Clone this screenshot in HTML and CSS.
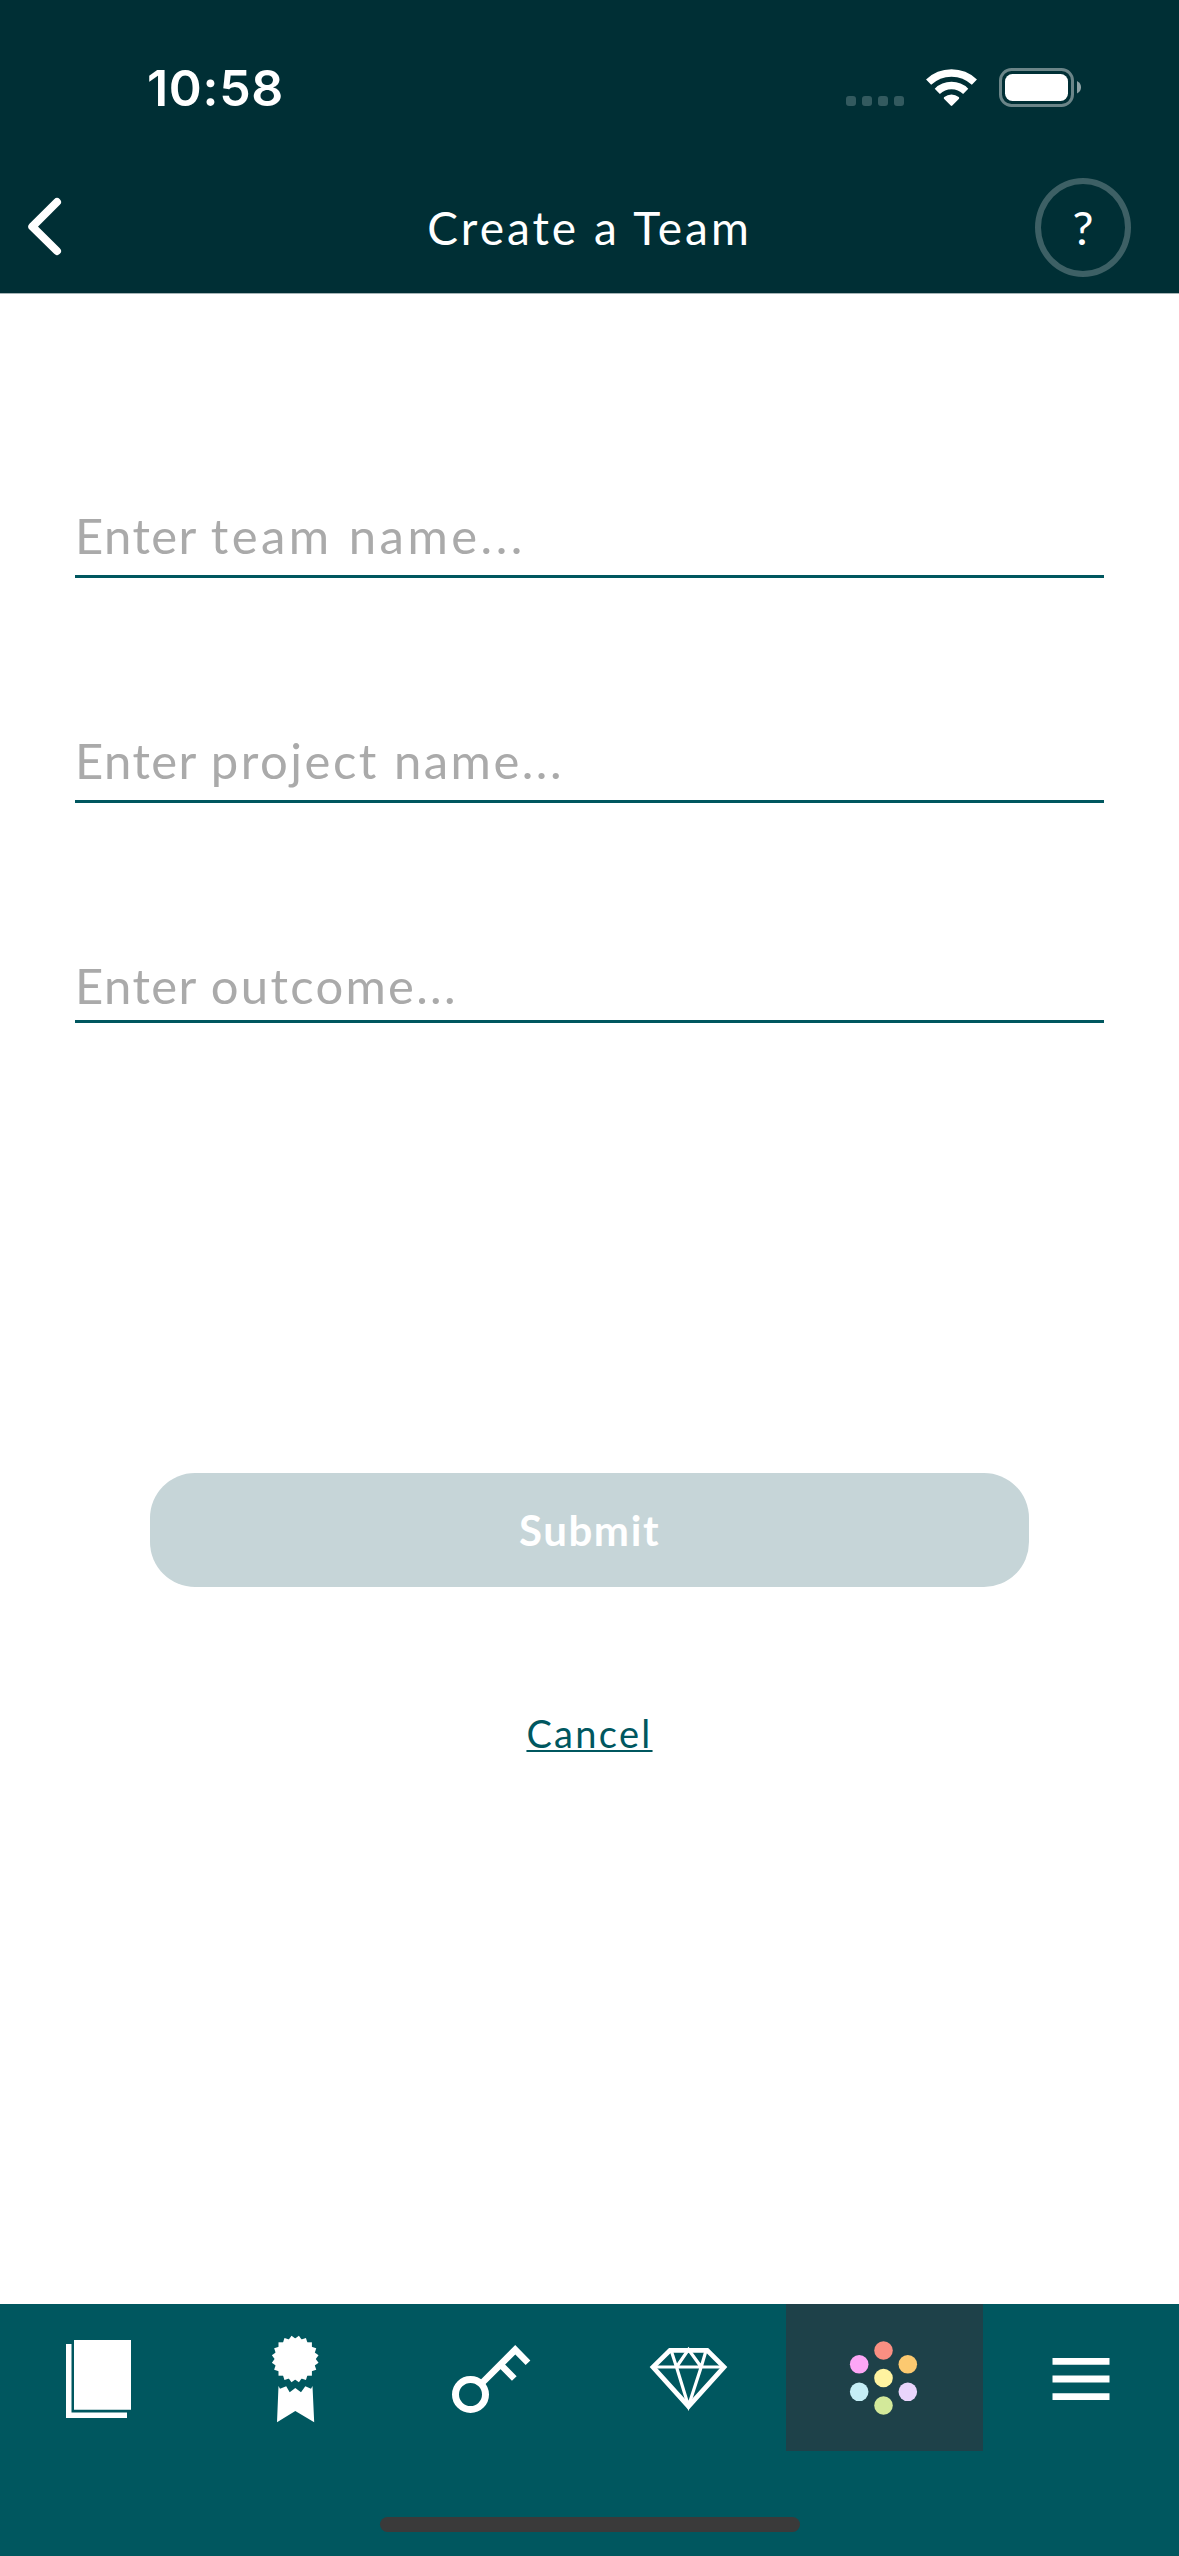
FILE: index.html
```html
<!DOCTYPE html>
<html lang="en">
<head>
<meta charset="utf-8">
<title>Create a Team</title>
<link rel="stylesheet" href="styles.css">
</head>
<body>
<div class="app">
  <header class="header">
    <div class="status">
      <span class="time">10:58</span>
      <svg class="status-icons" width="240" height="40" viewBox="845 68 240 40">
        <g fill="#335a5f">
          <rect x="846" y="96" width="10" height="10" rx="3"/>
          <rect x="862" y="96" width="10" height="10" rx="3"/>
          <rect x="878" y="96" width="10" height="10" rx="3"/>
          <rect x="894" y="96" width="10" height="10" rx="3"/>
        </g>
        <g fill="none" stroke="#fff" stroke-width="7.4">
          <path d="M928.6 82.1A33.2 33.2 0 0 1 974.4 82.1"/>
          <path d="M937.3 91.3A20.4 20.4 0 0 1 965.7 91.3"/>
        </g>
        <path d="M944.2 99C943.6 98.4 943.7 97.6 944.3 97.1A11.5 11.5 0 0 1 958.7 97.1C959.3 97.6 959.4 98.4 958.8 99L952.3 105.5Q951.5 106.3 950.7 105.5Z" fill="#fff"/>
        <rect x="1000.500" y="69.500" width="72" height="36" rx="11" fill="none" stroke="#6b8588" stroke-width="3"/>
        <rect x="1005" y="74" width="63" height="27" rx="7.500" fill="#fff"/>
        <path d="M1077 81Q1081 83 1081 87.300Q1081 91.500 1077 93.500Z" fill="#8ea2a5"/>
      </svg>
    </div>
    <div class="nav">
      <a class="back" aria-label="Back">
        <svg width="40" height="64" viewBox="24 195 40 64"><path d="M57 202L32.300 226.700L57 251" fill="none" stroke="#fff" stroke-width="8" stroke-linecap="round" stroke-linejoin="round"/></svg>
      </a>
      <h1 class="title">Create a Team</h1>
      <button class="help">?</button>
    </div>
  </header>

  <main class="form">
    <div class="field field-team"><span class="verb">Enter </span>team name...</div>
    <div class="field field-project"><span class="verb">Enter </span>project name...</div>
    <div class="field field-outcome"><span class="verb">Enter </span>outcome...</div>
    <button class="submit">Submit</button>
    <a class="cancel">Cancel</a>
  </main>

  <nav class="tabs">
    <a class="tab" aria-label="Pages">
      <svg viewBox="0 2304 196.5 147" fill="#fff">
        <path d="M66 2344H71.500V2412.500H127V2418H66Z"/>
        <path d="M74 2340H131V2409.700H74Z"/>
      </svg>
    </a>
    <a class="tab" aria-label="Awards">
      <svg viewBox="196.500 2304 196.500 147" fill="#fff">
        <g transform="translate(294.700 2359)">
          <rect x="-16.700" y="-16.700" width="33.400" height="33.400"/>
          <rect x="-16.700" y="-16.700" width="33.400" height="33.400" transform="rotate(18)"/>
          <rect x="-16.700" y="-16.700" width="33.400" height="33.400" transform="rotate(36)"/>
          <rect x="-16.700" y="-16.700" width="33.400" height="33.400" transform="rotate(54)"/>
          <rect x="-16.700" y="-16.700" width="33.400" height="33.400" transform="rotate(72)"/>
        </g>
        <path d="M278 2386L279.500 2388.800L285.700 2386.300L289.200 2392.200L294.800 2388L300.500 2392.200L304.800 2386.300L310.500 2388.800L312 2386L313.700 2422.300L294.800 2411L276.500 2422.300Z"/>
      </svg>
    </a>
    <a class="tab" aria-label="Keys">
      <svg viewBox="393 2304 196.500 147" fill="none" stroke="#fff">
        <circle cx="470.500" cy="2394.500" r="15" stroke-width="7"/>
        <path d="M482.500 2382.500L515.200 2349.800L528 2362.800M500.500 2364.500L514.300 2378.500" stroke-width="6.600"/>
      </svg>
    </a>
    <a class="tab" aria-label="Gems">
      <svg viewBox="589.500 2304 196.500 147" fill="none" stroke="#fff">
        <path d="M669.500 2350.300H706.700L723.500 2367L688 2406.300L652.500 2367Z" stroke-width="4.800"/>
        <path d="M652 2367H724M670.500 2350L676 2367L688 2406L700.700 2367L705.700 2350M676 2367L688 2349.500L700.700 2367" stroke-width="3.200"/>
      </svg>
    </a>
    <a class="tab tab-active" aria-label="Teams">
      <svg viewBox="786 2304 196.500 147">
        <circle cx="883.500" cy="2350.500" r="9.300" fill="#fa8f82"/>
        <circle cx="859.200" cy="2364.300" r="9.300" fill="#fda6f6"/>
        <circle cx="907.800" cy="2364.300" r="9.300" fill="#fcc970"/>
        <circle cx="883.500" cy="2378" r="9.300" fill="#fff3a0"/>
        <circle cx="859.200" cy="2391.800" r="9.300" fill="#c5eef6"/>
        <circle cx="907.800" cy="2391.800" r="9.300" fill="#ead5fc"/>
        <circle cx="883.500" cy="2405.500" r="9.300" fill="#d3e99a"/>
      </svg>
    </a>
    <a class="tab" aria-label="Menu">
      <svg viewBox="982.500 2304 196.500 147" fill="#fff">
        <path d="M1052 2358H1109V2364.800H1052ZM1052 2375.500H1109V2382.500H1052ZM1052 2393.200H1109V2400H1052Z"/>
      </svg>
    </a>
    <div class="home-indicator"></div>
  </nav>
</div>
</body>
</html>
```
FILE: styles.css
```css
* { box-sizing: border-box; }

body {
  margin: 0;
  background: #fff;
  font-family: Lato, sans-serif;
}

a, svg { display: block; }

.app {
  display: flex;
  flex-direction: column;
  width: 1179px;
  height: 2556px;
  overflow: hidden;
}

.header {
  height: 294px;
  background: #002f35;
  border-bottom: 1px solid #a6b4b6;
  color: #fff;
}

.status {
  display: flex;
  justify-content: space-between;
  height: 161px;
  padding: 58px 94px 0 147px;
}

.time {
  font: 600 50px/60px Inter, sans-serif;
  letter-spacing: 0.7px;
}

.status-icons { margin-top: 10px; }

.nav {
  display: grid;
  grid-template-columns: 144px 1fr 144px;
  align-items: center;
  height: 132px;
}

.back { padding-left: 24px; }

.title {
  margin: 0;
  padding-top: 2px;
  font-size: 46px;
  line-height: 60px;
  font-weight: 400;
  letter-spacing: 3px;
  text-align: center;
}

.help {
  width: 96px;
  height: 99px;
  padding: 0;
  border: 6px solid #3d6065;
  border-radius: 50%;
  background: none;
  color: #fff;
  font: 400 47px/60px Lato, sans-serif;
}

.form {
  display: flex;
  flex-direction: column;
  flex: 1;
  padding: 211px 75px 0;
}

.field {
  height: 73px;
  margin-bottom: 152px;
  border-bottom: 3px solid #00575f;
  color: #aaa;
  font-size: 49px;
  line-height: 60px;
}

.verb { letter-spacing: 1.4px; }
.field-team { letter-spacing: 3.5px; }
.field-project { letter-spacing: 2.5px; }

.field-outcome {
  height: 68px;
  margin-bottom: 450px;
  letter-spacing: 2.3px;
}

.submit {
  height: 114px;
  margin: 0 75px;
  padding: 0;
  border: 0;
  border-radius: 45px;
  background: #c6d5d8;
  color: #fff;
  font: 700 42px/60px Lato, sans-serif;
  letter-spacing: 1.6px;
}

.cancel {
  align-self: center;
  margin-top: 116px;
  color: #00575f;
  font-size: 38px;
  line-height: 60px;
  letter-spacing: 2.3px;
  text-decoration: underline;
  text-decoration-thickness: 2px;
  text-underline-offset: 2px;
}

.tabs {
  display: grid;
  grid-template-columns: repeat(6, 1fr);
  grid-template-rows: 147px 105px;
  height: 252px;
  background: #00575f;
}

.tab svg { width: 100%; height: 147px; }

.tab-active { background: #1e4149; }

.home-indicator {
  grid-column: 1 / -1;
  justify-self: center;
  width: 420px;
  height: 15px;
  margin-top: 66px;
  border-radius: 8px;
  background: #3a3a3a;
}
```
